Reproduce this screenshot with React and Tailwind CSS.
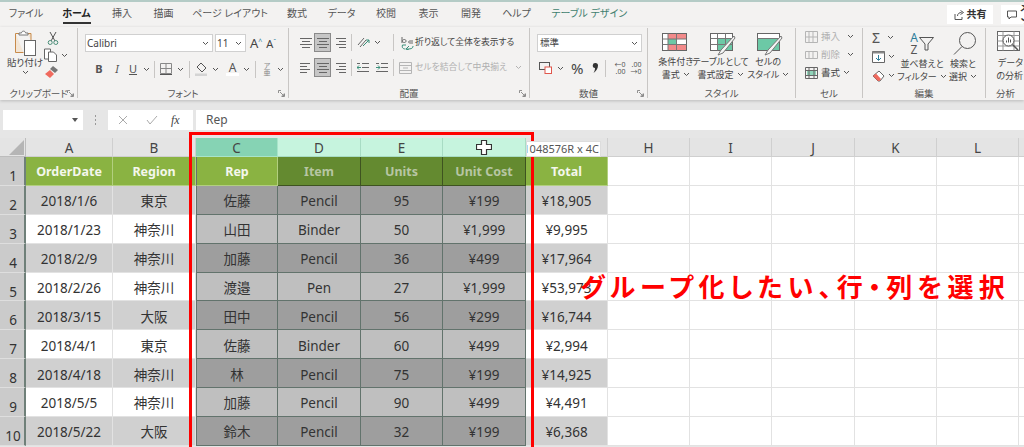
const jp = "font-['Noto_Sans','Noto_Sans_CJK_JP',sans-serif] [font-feature-settings:'palt']";

const tabs = [
    ["ファイル", "w-[30px]"],
    ["ホーム", "w-[28px]"],
    ["挿入", "w-[20px]"],
    ["描画", "w-[20px]"],
    ["ページ レイアウト", "w-[70px]"],
    ["数式", "w-[21px]"],
    ["データ", "w-[25px]"],
    ["校閲", "w-[21px]"],
    ["表示", "w-[21px]"],
    ["開発", "w-[21px]"],
    ["ヘルプ", "w-[27px]"],
];

const rows = [
    ["2018/1/6", "東京", "佐藤", "Pencil", "95", "¥199", "¥18,905"],
    ["2018/1/23", "神奈川", "山田", "Binder", "50", "¥1,999", "¥9,995"],
    ["2018/2/9", "神奈川", "加藤", "Pencil", "36", "¥499", "¥17,964"],
    ["2018/2/26", "神奈川", "渡邉", "Pen", "27", "¥1,999", "¥53,973"],
    ["2018/3/15", "大阪", "田中", "Pencil", "56", "¥299", "¥16,744"],
    ["2018/4/1", "東京", "佐藤", "Binder", "60", "¥499", "¥2,994"],
    ["2018/4/18", "神奈川", "林", "Pencil", "75", "¥199", "¥14,925"],
    ["2018/5/5", "神奈川", "加藤", "Pencil", "90", "¥499", "¥4,491"],
    ["2018/5/22", "大阪", "鈴木", "Pencil", "32", "¥199", "¥6,368"],
];

const Chev = ({ className = "" }) => (
    <svg width="7" height="5" viewBox="0 0 7 5" className={`shrink-0 ${className}`}>
        <path d="M1 1l2.5 2.5L6 1" fill="none" stroke="#555" strokeWidth="1" />
    </svg>
);

const Launcher = () => (
    <svg width="7" height="7" viewBox="0 0 7 7" className="absolute right-[3px] bottom-[1px]">
        <path d="M.5 3V.5H3M6.5 3.5v3H3.5M2 2l3.5 3.5M5.8 3.8v2h-2" fill="none" stroke="#777" strokeWidth=".8" />
    </svg>
);

const Sep = ({ className = "h-[17px]" }) => <div className={`w-px shrink-0 bg-[#c8c6c4] ${className}`} />;

const Lines = ({ kind = "center" }) => {
    const ends = { left: [1, 11, 1, 8], center: [1, 13, 3, 11], right: [3, 13, 6, 13] }[kind];
    return (
        <svg width="14" height="12" viewBox="0 0 14 12" className="shrink-0">
            <path d={`M${ends[0]} 1.5H${ends[1]}M${ends[2]} 4.5H${ends[3]}M${ends[0]} 7.5H${ends[1]}M${ends[2]} 10.5H${ends[3]}`} stroke="#666" fill="none" />
        </svg>
    );
};

const AlignBox = ({ on, children }) => (
    <div className={`w-[17px] h-[19px] flex items-center justify-center ${on ? "bg-[#c6c6c6] border border-[#8a8a8a]" : ""}`}>{children}</div>
);

const Group = ({ w, label, launcher, children }) => (
    <div className={`relative shrink-0 h-[70px] border-r border-[#c8c6c4] ${w}`}>
        {children}
        <div className="absolute left-0 right-0 bottom-[-2px] text-center text-[9.5px] leading-[12px] text-[#555]">{label}</div>
        {launcher && <Launcher />}
    </div>
);

const BigLabel = ({ a, b }) => (
    <div className="w-full text-[9px] leading-[12.5px] text-[#444] whitespace-nowrap">
        <div className="flex justify-center">{a}</div>
        <div className="flex items-center justify-center gap-[3px]">{b}<Chev /></div>
    </div>
);

const Ribbon = () => (
    <div className="h-[73px] bg-[#f3f2f1] shadow-[0_1px_3px_#bbb] pt-[1px] flex overflow-hidden relative">
        {/* クリップボード */}
        <Group w="w-[78px]" label="クリップボード" launcher>
            <div className="flex pl-[8px] pt-[2px]">
                <div className="w-[34px] flex flex-col items-center">
                    <svg width="23" height="26" viewBox="0 0 23 26">
                        <path d="M1.5 3.5h4M13 3.5h4V10M1.5 3.5v19h8" fill="#f3e6d6" stroke="#c78a4a" />
                        <path d="M5 5V3h2.5c0-2.5 4-2.5 4 0H14v2z" fill="#fff" stroke="#777" />
                        <rect x="10.5" y="10.5" width="11" height="15" fill="#fff" stroke="#666" />
                    </svg>
                    <div className="text-[9.5px] leading-[13px] text-[#444] whitespace-nowrap">貼り付け</div>
                    <Chev className="mt-[1px]" />
                </div>
                <div className="ml-[2px] flex flex-col gap-[3px] pt-[1px]">
                    <svg width="12" height="14" viewBox="0 0 12 14" className="ml-[3px]">
                        <path d="M3 1l5 9M9 1L4 10" stroke="#555" fill="none" />
                        <circle cx="3.2" cy="11.5" r="2" fill="none" stroke="#4b8f7a" />
                        <circle cx="8.8" cy="11.5" r="2" fill="none" stroke="#4b8f7a" />
                    </svg>
                    <div className="flex items-center gap-[3px]">
                        <svg width="14" height="14" viewBox="0 0 14 14">
                            <path d="M.5 1h6v10H.5z" fill="#fff" stroke="#666" />
                            <path d="M4.5 4h5l3 3v6.5h-8z" fill="#fff" stroke="#666" />
                        </svg>
                        <Chev />
                    </div>
                    <svg width="14" height="14" viewBox="0 0 14 14" className="ml-[1px]">
                        <path d="M8 1l5 4-3 3-5-4z" fill="#777" />
                        <path d="M5 5l4 4-4 4-5-4z" fill="#f06a5e" />
                    </svg>
                </div>
            </div>
        </Group>

        {/* フォント */}
        <Group w="w-[211px]" label="フォント" launcher>
            <div className="flex items-center h-[18px] mt-[6px] pl-[7px]">
                <div className="w-[128px] h-[18px] bg-white border border-[#d0d0d0] flex items-center justify-between pl-[1px] pr-[3px] text-[10px] text-[#444]">Calibri<Chev /></div>
                <div className="ml-[2px] w-[31px] h-[18px] bg-white border border-[#d0d0d0] flex items-center justify-between pl-[1px] pr-[3px] text-[10px] text-[#444]">11<Chev /></div>
                <div className="ml-[4px] text-[13px] text-[#444] leading-none">A<sup className="text-[7px] text-[#2d7d9a]">^</sup></div>
                <div className="ml-[4px] text-[11px] text-[#444] leading-none">A<sup className="text-[7px] text-[#2d7d9a]">ˇ</sup></div>
            </div>
            <div className="flex items-center h-[18px] mt-[8px] pl-[12px] text-[#555] text-[11px]">
                <span className="w-[18px] text-center font-bold">B</span>
                <span className="w-[18px] text-center italic">I</span>
                <span className="w-[14px] text-center underline">U</span>
                <Chev className="ml-[3px]" />
                <Sep className="h-[17px] ml-[4px]" />
                <svg width="12" height="12" viewBox="0 0 12 12" className="ml-[5px]">
                    <path d="M.5.5h11v10H.5zM6 .5v10M.5 5.5h11" fill="none" stroke="#888" />
                    <path d="M0 11.5h12" stroke="#555" />
                </svg>
                <Chev className="ml-[5px]" />
                <Sep className="h-[17px] ml-[5px]" />
                <svg width="13" height="14" viewBox="0 0 13 14" className="ml-[5px]">
                    <path d="M6 1l5 5-4 4-5-5z" fill="none" stroke="#555" />
                    <rect x="0" y="11.5" width="12" height="2.5" fill="#d4d4d4" />
                </svg>
                <Chev className="ml-[4px]" />
                <div className="ml-[7px] w-[13px] flex flex-col items-center leading-[11px] text-[12px]">A<div className="w-[13px] h-[3px] bg-white" /></div>
                <Chev className="ml-[4px]" />
                <Sep className="h-[17px] ml-[5px]" />
                <div className="ml-[6px] w-[10px] flex flex-col items-center text-[7px] leading-[7px] text-[#888]"><span>ア</span><span>亜</span></div>
                <Chev className="ml-[5px]" />
            </div>
        </Group>

        {/* 配置 */}
        <Group w="w-[241px]" label="配置" launcher>
            <div className="flex items-center h-[19px] mt-[5px] pl-[8px]">
                <AlignBox><Lines /></AlignBox>
                <AlignBox on><Lines /></AlignBox>
                <AlignBox><Lines kind="right" /></AlignBox>
                <Sep className="h-[17px] ml-[3px]" />
                <svg width="13" height="13" viewBox="0 0 13 13" className="ml-[5px]">
                    <path d="M1 9l6-7M3 11l6-7" stroke="#666" fill="none" />
                    <path d="M6 10l6-6M12 4H9M12 4v3" stroke="#3a8f7a" fill="none" />
                </svg>
                <Chev className="ml-[4px]" />
                <Sep className="h-[17px] ml-[12px]" />
                <svg width="13" height="14" viewBox="0 0 13 14" className="ml-[7px]">
                    <path d="M1 1v6M1 5c1-2 4-2 4 0s-3 2-4 0M12 5H9c-2 0-2 2 0 2h3" stroke="#666" fill="none" />
                    <path d="M5 9H1.5c-1 3 1 4 3 4M5 13c4 0 7 0 7-3M8 10l-3 3 3 1" stroke="#3a8f7a" fill="none" />
                </svg>
                <span className="ml-[1px] text-[8.8px] text-[#444] whitespace-nowrap">折り返して全体を表示する</span>
            </div>
            <div className="flex items-center h-[19px] mt-[6px] pl-[8px]">
                <AlignBox><Lines kind="left" /></AlignBox>
                <AlignBox on><Lines /></AlignBox>
                <AlignBox><Lines kind="right" /></AlignBox>
                <Sep className="h-[17px] ml-[3px]" />
                <svg width="12" height="11" viewBox="0 0 12 11" className="ml-[5px]">
                    <path d="M5 1.5h7M5 5.5h7M0 9.5h12M0 1.5h3" stroke="#666" fill="none" />
                    <path d="M4 5.5H0M2 3.5l-2 2 2 2" stroke="#3a8f7a" fill="none" />
                </svg>
                <svg width="12" height="11" viewBox="0 0 12 11" className="ml-[7px]">
                    <path d="M5 1.5h7M5 5.5h7M0 9.5h12M0 1.5h3" stroke="#666" fill="none" />
                    <path d="M0 5.5h4M2 3.5l2 2-2 2" stroke="#3a8f7a" fill="none" />
                </svg>
                <Sep className="h-[17px] ml-[5px]" />
                <svg width="13" height="12" viewBox="0 0 13 12" className="ml-[5px]">
                    <path d="M.5.5h12v11H.5zM.5 3.5h12M.5 8.5h12M4 6h5" fill="none" stroke="#b5b5b5" />
                </svg>
                <span className="ml-[3px] text-[8.8px] text-[#b0b0b0] whitespace-nowrap">セルを結合して中央揃え</span>
                <Chev className="ml-[8px] opacity-40" />
            </div>
        </Group>

        {/* 数値 */}
        <Group w="w-[118px]" label="数値" launcher>
            <div className="ml-[7px] mt-[6px] w-[105px] h-[18px] bg-white border border-[#d0d0d0] flex items-center justify-between pl-[2px] pr-[3px] text-[9.5px] text-[#444]">標準<Chev /></div>
            <div className="flex items-center h-[18px] mt-[7px] pl-[9px]">
                <svg width="13" height="12" viewBox="0 0 13 12">
                    <rect x=".5" y=".5" width="10" height="7" fill="none" stroke="#555" />
                    <rect x="6" y="5" width="6.5" height="6.5" fill="#fff" stroke="#e0574c" />
                </svg>
                <Chev className="ml-[5px]" />
                <span className="ml-[7px] text-[15px] leading-none text-[#444]">%</span>
                <svg width="7" height="12" viewBox="0 0 7 12" className="ml-[9px]">
                    <path d="M3.5 1a2.5 2.5 0 0 1 2.5 2.5c0 3-2 6-4.5 7.5 1-2 1.500-3 1.500-5A2.500 2.500 0 0 1 3.500 1z" fill="#333" />
                </svg>
                <Sep className="h-[17px] ml-[6px]" />
                <div className="ml-[4px] w-[15px] text-[7px] leading-[7px] text-right text-[#555]"><div>←0</div><div>.00</div></div>
                <div className="ml-[4px] w-[12px] text-[7px] leading-[7px] text-right text-[#555]"><div>.00</div><div>→0</div></div>
            </div>
        </Group>

        {/* スタイル */}
        <Group w="w-[148px]" label="スタイル">
            <div className="flex pt-[4px] pl-[4px]">
                <div className="w-[48px] flex flex-col items-center">
                    <svg width="26" height="24" viewBox="0 0 26 24" className="shrink-0 mr-[2px]">
                        <rect x=".5" y="1.5" width="24" height="17" fill="#fff" stroke="#666" />
                        <rect x="6" y="2" width="18" height="5" fill="#f28a8a" />
                        <rect x="6" y="12" width="18" height="6" fill="#f28a8a" />
                        <rect x="6" y="7" width="8" height="5" fill="#6cc9a6" />
                        <path d="M.5 7h24M.5 12.5h24M6 1.5v17M14.5 1.5v17" stroke="#777" fill="none" />
                    </svg>
                    <BigLabel a="条件付き" b="書式" />
                </div>
                <div className="w-[42px] flex flex-col items-center">
                    <svg width="26" height="24" viewBox="0 0 26 24" className="shrink-0 ml-[4px]">
                        <rect x=".5" y="1.5" width="22" height="17" fill="#fff" stroke="#666" />
                        <rect x="8" y="7" width="14" height="11" fill="#6cc9a6" />
                        <path d="M.5 6.500h22M.5 12.500h22M7.500 1.500v17M15.500 1.500v17" stroke="#777" fill="none" />
                        <path d="M24 4L11 18l-3 5 5-2L25 6z" fill="#f5f5f5" stroke="#777" />
                    </svg>
                    <BigLabel a="テーブルとして" b="書式設定" />
                </div>
                <div className="w-[54px] flex flex-col items-center">
                    <svg width="26" height="24" viewBox="0 0 26 24" className="shrink-0 ml-[4px]">
                        <rect x=".5" y="1.5" width="22" height="17" fill="#fff" stroke="#666" />
                        <rect x="1" y="7" width="21" height="11" fill="#6cc9a6" />
                        <path d="M.5 6.5h22" stroke="#777" />
                        <path d="M24 4L11 18l-3 5 5-2L25 6z" fill="#f5f5f5" stroke="#777" />
                    </svg>
                    <BigLabel a="セルの" b="スタイル" />
                </div>
            </div>
        </Group>

        {/* セル */}
        <Group w="w-[67px]" label="セル">
            <div className="pl-[9px] pt-[2px] flex flex-col gap-[5px] text-[9.5px] leading-[13px]">
                <div className="flex items-center text-[#b0b0b0]">
                    <svg width="13" height="12" viewBox="0 0 13 12"><path d="M.5.5h12v11H.5zM.5 6h12M4 .5v11M8 .5v11" fill="none" stroke="#b5b5b5" /></svg>
                    <span className="ml-[3px] w-[26px]">挿入</span><Chev />
                </div>
                <div className="flex items-center text-[#b0b0b0]">
                    <svg width="13" height="12" viewBox="0 0 13 12"><path d="M.5 2.5h12v7H.5zM4 2.5v7M8 2.5v7" fill="none" stroke="#b5b5b5" /></svg>
                    <span className="ml-[3px] w-[26px]">削除</span><Chev />
                </div>
                <div className="flex items-center text-[#444]">
                    <svg width="13" height="12" viewBox="0 0 13 12"><rect x="2" y="3" width="9" height="6" fill="#8fd4b9" /><path d="M.5.5h12v11H.5zM.5 3.5h12M.5 8.5h12M4 .5v11M9 .5v11" fill="none" stroke="#666" /></svg>
                    <span className="ml-[3px] w-[22px]">書式</span><Chev />
                </div>
            </div>
        </Group>

        {/* 編集 */}
        <Group w="w-[123px]" label="編集">
            <div className="flex">
                <div className="pl-[9px] pt-[3px] w-[38px] flex flex-col gap-[6px]">
                    <div className="flex items-center gap-[4px] h-[13px]"><span className="w-[11px] text-[14px] leading-none text-[#555]">Σ</span><Chev /></div>
                    <div className="flex items-center gap-[3px] h-[13px]">
                        <svg width="13" height="12" viewBox="0 0 13 12"><path d="M.5.5h12v11H.5z" fill="#fff" stroke="#666" /><path d="M.5.5h12v2H.5z" fill="#888" /><path d="M6.5 4v5M4 7l2.500 2.500L9 7" stroke="#2d7d9a" fill="none" /></svg>
                        <Chev />
                    </div>
                    <div className="flex items-center gap-[3px] h-[13px]">
                        <svg width="13" height="12" viewBox="0 0 13 12"><path d="M7 1l5 5-4 5-2 0-5-5z" fill="#fff" stroke="#666" /><path d="M4 3.5L9 9 7.5 11H6L1 6z" fill="#f06a5e" /></svg>
                        <Chev />
                    </div>
                </div>
                <div className="w-[42px] pt-[2px] flex flex-col items-center">
                    <div className="h-[28px] flex items-center">
                        <div className="text-[12px] leading-[12px] text-center"><div className="text-[#2d7d9a]">A</div><div className="text-[#555]">Z</div></div>
                        <svg width="15" height="14" viewBox="0 0 15 14" className="ml-[1px]"><path d="M.5.5h14L9 7v6H6V7z" fill="none" stroke="#555" /></svg>
                    </div>
                    <BigLabel a="並べ替えと" b="フィルター" />
                </div>
                <div className="w-[40px] pt-[1px] flex flex-col items-center">
                    <svg width="24" height="29" viewBox="0 0 24 26" className="ml-[3px]"><circle cx="14.5" cy="10" r="8" fill="none" stroke="#555" /><path d="M9 16L1 24" stroke="#555" /></svg>
                    <BigLabel a="検索と" b="選択" />
                </div>
            </div>
        </Group>

        {/* 分析 */}
        <div className="relative shrink-0 h-[70px] w-[38px]">
            <div className="pt-[2px] pl-[11px]">
                <svg width="24" height="24" viewBox="0 0 24 24">
                    <rect x=".5" y="1.5" width="22" height="19" fill="#fff" stroke="#666" />
                    <path d="M.5 5.5h22M.5 11h22M.5 16h22M6 1.5v19M17 1.5v19" stroke="#999" fill="none" />
                    <circle cx="11.5" cy="10.5" r="5.5" fill="#fff" stroke="#555" />
                    <path d="M9.5 12.5v-2M11.5 12.5v-5M13.5 12.5v-3" stroke="#555" />
                    <path d="M15.5 14.5L21 20" stroke="#555" strokeWidth="1.5" />
                </svg>
            </div>
            <div className="mt-[3px] text-right text-[9px] leading-[12.5px] text-[#444] pr-[1px]">
                <div>データ</div>
                <div>の分析</div>
            </div>
            <div className="absolute left-[10px] bottom-[-2px] text-[9.5px] leading-[12px] text-[#555]">分析</div>
        </div>
    </div>
);

const FormulaBar = () => (
    <div className="h-[38px] pt-[10px] pl-[3px] flex items-start text-[#555]">
        <div className="w-[80px] h-[20px] bg-white flex items-center justify-end pr-[5px]">
            <svg width="6" height="4" viewBox="0 0 6 4"><path d="M0 0h6L3 4z" fill="#555" /></svg>
        </div>
        <div className="w-[25px] h-[20px] flex flex-col items-center justify-center gap-[2px]">
            <div className="w-px h-[2px] bg-[#999]" /><div className="w-px h-[2px] bg-[#999]" /><div className="w-px h-[2px] bg-[#999]" />
        </div>
        <div className="w-[85px] h-[20px] bg-white flex items-center pl-[10px] text-[12px]">
            <svg width="10" height="10" viewBox="0 0 10 10"><path d="M1 1l8 8M9 1L1 9" stroke="#aaa" fill="none" /></svg>
            <svg width="12" height="10" viewBox="0 0 12 10" className="ml-[18px]"><path d="M1 5l3 4 7-8" stroke="#aaa" fill="none" /></svg>
            <span className="ml-[13px] font-['Liberation_Serif',serif] italic text-[#444]">fx</span>
        </div>
        <div className="ml-[3px] flex-1 h-[20px] bg-white flex items-center pl-[10px] text-[12px] text-[#555]">Rep</div>
    </div>
);

const colNames = ["A", "B", "C", "D", "E", "F", "G", "H", "I", "J", "K", "L", "M"];

const ColHead = ({ name, i }) => {
    let bg = "bg-[#e4e4e4] border-r border-[#cfcfcf]";
    if (i === 2) bg = "bg-[#86d3b4] border-r border-[#a8e4ca]";
    if (i > 2 && i < 6) bg = "bg-[#c6f4de] border-r border-[#a8dcc4]";
    return (
        <div className={`flex items-center justify-center pt-[2px] text-[13.5px] text-[#444] border-b border-[#9aa8a2] ${bg}`}>
            {i === 5 ? (
                <svg width="16" height="15" viewBox="0 0 16 15" className="-translate-y-[1px]">
                    <path d="M5.5.5h5v4h5v5h-5v5h-5v-5h-5v-5h5z" fill="#fff" stroke="#333" strokeWidth="1.2" />
                </svg>
            ) : name}
        </div>
    );
};

const RowHead = ({ n }) => (
    <div className="flex items-center justify-center pt-[10px] pl-[2px] text-[13.5px] leading-[16px] text-[#333] bg-[#cbcbcb] border-b border-[#dedede] border-r-2 border-r-[#6f8079]">{n}</div>
);

const Cell = ({ row, col, children }) => {
    const selected = col >= 2 && col <= 5;
    const even = row % 2 === 0;
    let cls;
    if (row === -1) {
        cls = selected && col !== 2
            ? "bg-[#648a30] text-[#b7c6a3] font-bold text-[12.5px] border-r border-b border-[#3e5320]"
            : "bg-[#8ab342] text-[#f4f7ec] font-bold text-[12.5px] border-r border-b border-[#b2cf7f]";
    } else if (selected) {
        cls = `${even ? "bg-[#9e9e9e]" : "bg-[#bfbfbf]"} text-[#333] text-[13.5px] border-r border-b border-[#62736c]`;
    } else {
        cls = `${even ? "bg-[#d0d0d0]" : "bg-white"} text-[#333] text-[13.5px] border-r border-b border-[#e2e2e2]`;
    }
    const edge = col === 2 ? "border-l border-l-[#62736c]" : "";
    return <div className={`flex items-center justify-center whitespace-nowrap pt-[3px] ${cls} ${edge}`}>{children}</div>;
};

const Sheet = () => (
    <div className={`grid grid-cols-[26px_87px_83px_82px_83px_82px_83px_82px_82px_82px_83px_82px_82px_87px] grid-rows-[19px_repeat(10,28.9px)] bg-white ${jp}`}>
        <div className="bg-[#e4e4e4] border-r border-b border-[#bdbdbd] flex items-end justify-end p-[1px]">
            <div className="w-0 h-0 border-l-[15px] border-l-transparent border-b-[15px] border-b-[#b5b5b5]" />
        </div>
        {colNames.map((c, i) => <ColHead key={c} name={c} i={i} />)}

        <RowHead n={1} />
        {["OrderDate", "Region", "Rep", "Item", "Units", "Unit Cost", "Total"].map((h, i) => (
            <Cell key={h} row={-1} col={i}>{h}</Cell>
        ))}
        {[0, 1, 2, 3, 4, 5].map((i) => <div key={i} className="border-r border-b border-[#e2e2e2]" />)}

        {rows.map((r, ri) => [
            <RowHead key={`h${ri}`} n={ri + 2} />,
            ...r.map((v, ci) => <Cell key={`${ri}-${ci}`} row={ri} col={ci}>{v}</Cell>),
            ...[0, 1, 2, 3, 4, 5].map((i) => <div key={`e${ri}-${i}`} className="border-r border-b border-[#e2e2e2]" />),
        ])}
    </div>
);

export default function App() {
    return (
        <div className={`relative w-[1024px] h-[447px] overflow-hidden bg-[#e6e6e6] ${jp}`}>
            <div className="h-[27px] bg-[#f3f2f1] border-t-2 border-[#b4cbc6] flex items-center justify-between">
                <div className="flex items-center pl-[11px] pb-[3px] gap-[21.5px] text-[10px] text-[#555] whitespace-nowrap">
                    {tabs.map(([t, w]) => (
                        <div key={t} className={`${w} flex justify-center ${t === "ホーム" ? "relative font-bold text-[#222]" : ""}`}>
                            {t}
                            {t === "ホーム" && <div className="absolute left-0 right-0 bottom-[-3px] h-[2px] bg-[#333]" />}
                        </div>
                    ))}
                    <div className="text-[#3f7f6e]">テーブル デザイン</div>
                </div>
                <div className="flex items-center gap-[8px] text-[10px] text-[#333] font-bold">
                    <div className="w-[46px] h-[19px] bg-white flex items-center justify-center gap-[3px]">
                        <svg width="10" height="10" viewBox="0 0 10 10"><path d="M1 4v5.5h7V7M3.5 6c0-2.5 2-3.5 4-3.5M6.5.5l3 2-3 2" fill="none" stroke="#555" /></svg>
                        共有
                    </div>
                    <div className="w-[23px] h-[19px] bg-white flex items-center gap-[3px] pl-[6px] overflow-hidden">
                        <svg width="10" height="10" viewBox="0 0 10 10" className="shrink-0"><path d="M.5 1h9v6H4L2 9V7H.5z" fill="none" stroke="#555" /></svg>
                        コメント
                    </div>
                </div>
            </div>
            <Ribbon />
            <FormulaBar />
            <Sheet />

            {/* 選択範囲の赤枠 */}
            <div className="absolute left-[189px] top-[132px] w-[345px] h-[330px] border-[3px] border-[#ff0000]" />
            <div className="absolute left-[526px] top-[141px] w-[75px] h-[16px] bg-white border border-[#ddd] overflow-hidden flex items-center justify-end pr-[1px] text-[11px] text-[#555] whitespace-nowrap">1048576R x 4C</div>
            <div className="absolute left-[580px] top-[266px] text-[26px] leading-[40px] font-bold tracking-[5.2px] text-[#ff0000] whitespace-nowrap font-['Noto_Sans_CJK_JP',sans-serif]">グループ化したい、行・列を選択</div>
        </div>
    );
}
